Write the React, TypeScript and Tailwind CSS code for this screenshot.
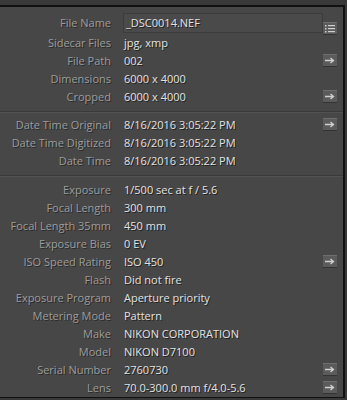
import React from "react";

type Row = { label: string; value: string; action?: "arrow" | "list"; boxed?: boolean };

const sections: Row[][] = [
  [
    { label: "File Name", value: "_DSC0014.NEF", action: "list", boxed: true },
    { label: "Sidecar Files", value: "jpg, xmp" },
    { label: "File Path", value: "002", action: "arrow" },
    { label: "Dimensions", value: "6000 x 4000" },
    { label: "Cropped", value: "6000 x 4000", action: "arrow" },
  ],
  [
    { label: "Date Time Original", value: "8/16/2016 3:05:22 PM", action: "arrow" },
    { label: "Date Time Digitized", value: "8/16/2016 3:05:22 PM" },
    { label: "Date Time", value: "8/16/2016 3:05:22 PM" },
  ],
  [
    { label: "Exposure", value: "1/500 sec at f / 5.6" },
    { label: "Focal Length", value: "300 mm" },
    { label: "Focal Length 35mm", value: "450 mm" },
    { label: "Exposure Bias", value: "0 EV" },
    { label: "ISO Speed Rating", value: "ISO 450", action: "arrow" },
    { label: "Flash", value: "Did not fire" },
    { label: "Exposure Program", value: "Aperture priority" },
    { label: "Metering Mode", value: "Pattern" },
    { label: "Make", value: "NIKON CORPORATION" },
    { label: "Model", value: "NIKON D7100" },
    { label: "Serial Number", value: "2760730", action: "arrow" },
    { label: "Lens", value: "70.0-300.0 mm f/4.0-5.6", action: "arrow" },
  ],
];

function ActionButton({ kind }: { kind: "arrow" | "list" }) {
  return (
    <div className="w-[14px] h-[12px] bg-[#5b5b5b] border-t border-[#6e6e6e] flex items-center justify-center shadow-[0_1px_0_#333]">
      {kind === "arrow" ? (
        <svg width="10" height="7" viewBox="0 0 10 7">
          <path d="M0 3.5H8M5.5 1L8.5 3.5L5.5 6" stroke="#d0d0d0" strokeWidth="1.3" fill="none" />
        </svg>
      ) : (
        <svg width="10" height="9" viewBox="0 0 10 9">
          <rect x="0" y="1" width="1.5" height="1.5" fill="#d0d0d0" />
          <rect x="0" y="4" width="1.5" height="1.5" fill="#d0d0d0" />
          <rect x="0" y="7" width="1.5" height="1.5" fill="#d0d0d0" />
          <rect x="3" y="1" width="7" height="1.2" fill="#d0d0d0" />
          <rect x="3" y="4" width="7" height="1.2" fill="#d0d0d0" />
          <rect x="3" y="7" width="7" height="1.2" fill="#d0d0d0" />
        </svg>
      )}
    </div>
  );
}

function MetaRow({ row }: { row: Row }) {
  return (
    <div className={`flex items-center ${row.boxed ? "h-[21px]" : "h-[18px]"}`}>
      <div className="w-[112px] shrink-0 text-right pr-[1px] text-[#9c9c9c] [text-shadow:1px_1px_0_#2a2a2a]">
        {row.label}
      </div>
      <div className="flex-1 flex items-center pl-[11px] h-full">
        {row.boxed ? (
          <div className="flex-1 h-[20px] bg-[#4a4a4a] border border-[#3c3c3c] pl-[2px] flex items-center text-[#e2e2e2] [text-shadow:1px_1px_0_#222]">
            {row.value}
          </div>
        ) : (
          <div className="flex-1 pl-[1px] text-[#e2e2e2] [text-shadow:1px_1px_0_#222]">{row.value}</div>
        )}
      </div>
      <div className={`w-[20px] shrink-0 flex ${row.boxed ? "items-end h-full -mb-[1px]" : "items-center"}`}>
        {row.action && <ActionButton kind={row.action} />}
      </div>
    </div>
  );
}

export default function App() {
  return (
    <div className="w-[347px] h-[400px] bg-[#393939] pt-[5px] overflow-hidden font-['Open_Sans',sans-serif] text-[11px] leading-none">
      <div className="w-[345px] h-[393px] bg-[#474747] border-t-2 border-r-2 border-b border-[#111]">
        {sections.map((sec, i) => (
          <div
            key={i}
            className={`${i === 0 ? "pt-[5px] pb-[6px]" : i === 1 ? "pt-[3px] pb-[6px]" : "pt-[4px]"} ${
              i === 0 ? "" : "border-t border-[#3a3a3a] shadow-[inset_0_1px_0_#525252]"
            }`}
          >
            {sec.map((r) => (
              <MetaRow key={r.label} row={r} />
            ))}
          </div>
        ))}
      </div>
    </div>
  );
}
